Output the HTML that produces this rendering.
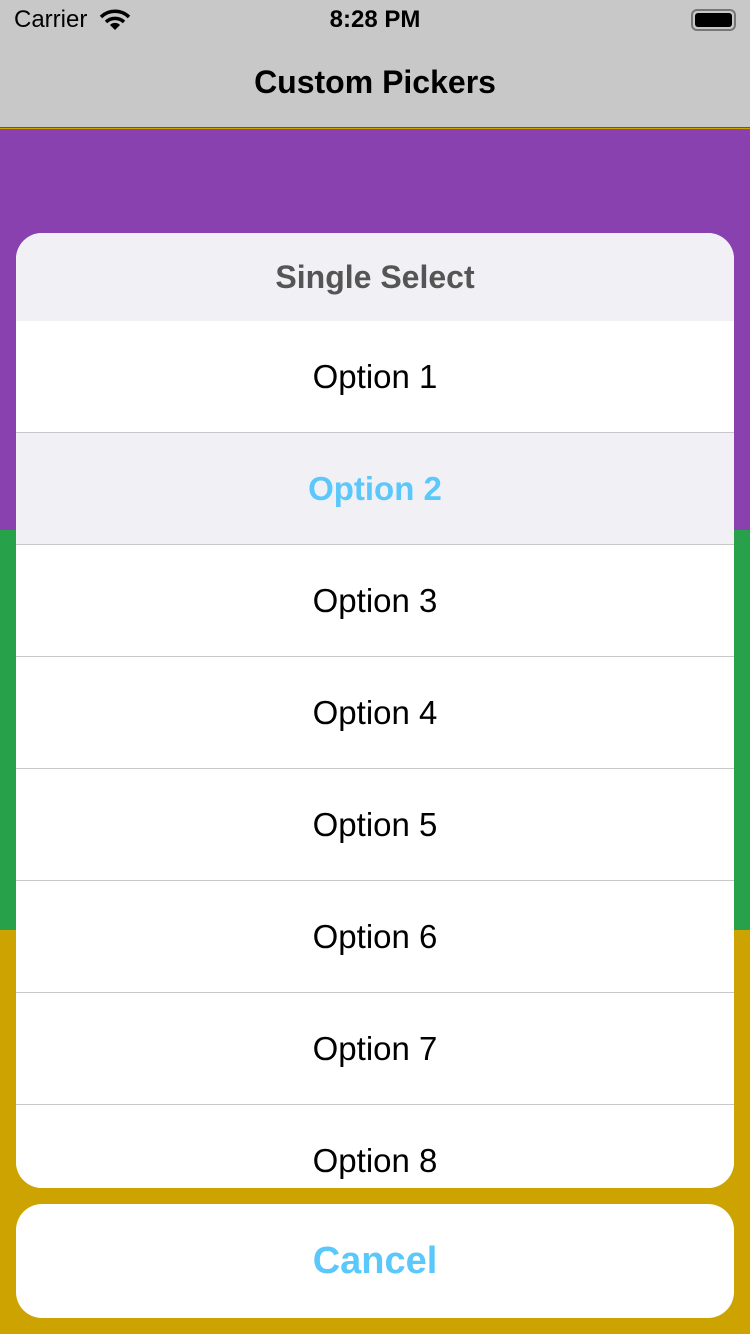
<!DOCTYPE html>
<html><head><style>
*{margin:0;padding:0;box-sizing:border-box}
body{width:750px;height:1334px;position:relative;overflow:hidden;font-family:"Liberation Sans",sans-serif;background:#cca300}
.abs{position:absolute}
.row{position:absolute;left:0;width:718px;height:112px;display:flex;align-items:center;justify-content:center;font-size:33px;color:#000;border-bottom:1px solid #c8c8cc;background:#fff}
</style></head><body>
<div class="abs" style="left:0;top:0;width:750px;height:128px;background:#c8c8c8;border-bottom:1px solid #6a4a7a"></div>
<div class="abs" style="left:14px;top:6px;font-size:24px;color:#000">Carrier</div>
<svg class="abs" style="left:99px;top:9px" width="32" height="22" viewBox="0 0 32 22"><path d="M2 8 A20 20 0 0 1 30 8" stroke="#000" stroke-width="3.5" fill="none"/><path d="M7 13 A13 13 0 0 1 25 13" stroke="#000" stroke-width="3.5" fill="none"/><path d="M16 21 L11 16 A7 7 0 0 1 21 16 Z" fill="#000"/></svg>
<div class="abs" style="left:0;width:750px;top:6px;text-align:center;font-size:24px;font-weight:bold;color:#000">8:28 PM</div>
<div class="abs" style="left:691px;top:9px;width:45px;height:22px;border:2px solid #777;border-radius:6px;padding:2px"><div style="width:100%;height:100%;background:#000;border-radius:3px"></div></div>
<div class="abs" style="left:0;width:750px;top:64px;text-align:center;font-size:32px;font-weight:bold;color:#000">Custom Pickers</div>
<div class="abs" style="left:0;top:129px;width:750px;height:401px;background:#8a41b0"></div>
<div class="abs" style="left:0;top:530px;width:750px;height:400px;background:#28a24a"></div>
<div class="abs" style="left:16px;top:233px;width:718px;height:955px;border-radius:26px;overflow:hidden;background:#fff">
<div class="abs" style="left:0;top:0;width:718px;height:88px;background:#f0f0f5;display:flex;align-items:center;justify-content:center;font-size:32px;color:#555;font-weight:bold">Single Select</div>
<div class="row" style="top:88px">Option 1</div>
<div class="row" style="top:200px;background:#f0f0f5;color:#5ac8fa;font-weight:bold">Option 2</div>
<div class="row" style="top:312px">Option 3</div>
<div class="row" style="top:424px">Option 4</div>
<div class="row" style="top:536px">Option 5</div>
<div class="row" style="top:648px">Option 6</div>
<div class="row" style="top:760px">Option 7</div>
<div class="row" style="top:872px">Option 8</div>
</div>
<div class="abs" style="left:16px;top:1204px;width:718px;height:114px;border-radius:26px;background:#fff;display:flex;align-items:center;justify-content:center;font-size:38px;font-weight:bold;color:#5ac8fa">Cancel</div>
</body></html>
